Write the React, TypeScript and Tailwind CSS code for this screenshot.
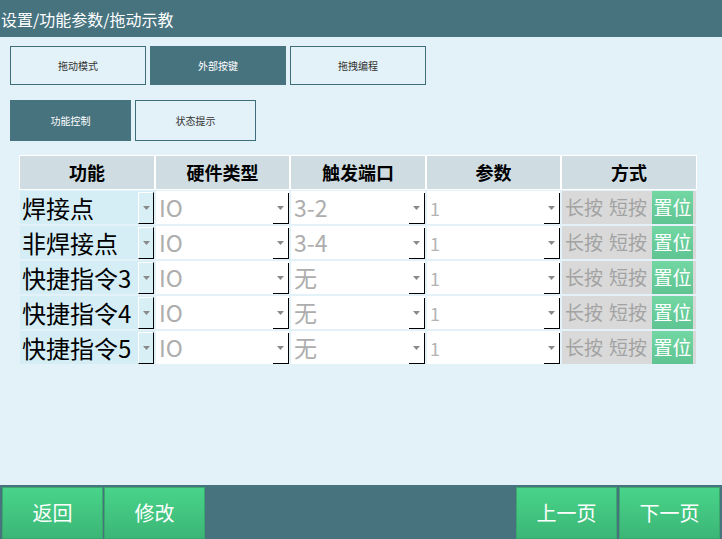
import React from "react"

const rows = [
	{ name: "焊接点", hw: "IO", port: "3-2", param: "1" },
	{ name: "非焊接点", hw: "IO", port: "3-4", param: "1" },
	{ name: "快捷指令3", hw: "IO", port: "无", param: "1" },
	{ name: "快捷指令4", hw: "IO", port: "无", param: "1" },
	{ name: "快捷指令5", hw: "IO", port: "无", param: "1" },
]

const Arrow = () => (
	<svg className="h-[4px] w-[7px]" viewBox="0 0 7 4">
		<path d="M0 0 L7 0 L3.5 4 Z" fill="#8a8a8a" />
	</svg>
)

// plain white combo cell, black L at right/bottom of the drop button
const Combo = ({ value, big }: { value: string; big?: boolean }) => (
	<div className="relative flex h-[33px] items-center bg-white pl-[3px]">
		<span
			className={
				big
					? "text-[23px] leading-none text-[#adadad]"
					: "text-[18px] leading-none text-[#b4b4b4]"
			}
		>
			{value}
		</span>
		<div className="absolute top-[2px] right-0 bottom-0 flex w-[16px] items-center justify-center border-r border-b border-black">
			<Arrow />
		</div>
	</div>
)

const TabOutline = ({ label, w, h }: { label: string; w: string; h: string }) => (
	<div
		className={`flex items-center justify-center border border-[#3f6d7a] bg-[#e3f2f8] text-[10px] text-[#333] ${w} ${h}`}
	>
		{label}
	</div>
)

const TabFilled = ({ label, w, h }: { label: string; w: string; h: string }) => (
	<div
		className={`flex items-center justify-center bg-[#47737f] text-[10px] text-white ${w} ${h}`}
	>
		{label}
	</div>
)

const GreenBtn = ({ label }: { label: string }) => (
	<div className="flex h-[52px] w-[101px] items-center justify-center border border-[#3aa86c] bg-gradient-to-b from-[#48d48a] to-[#3cb676] text-[20px] text-white">
		{label}
	</div>
)

export default function App() {
	return (
		<div
			className="flex h-[539px] w-[722px] flex-col bg-[#e3f2f8]"
			style={{ fontFamily: '"Noto Sans CJK SC", "Noto Sans", sans-serif' }}
		>
			{/* TITLE */}
			<div className="flex h-[37px] items-center bg-[#47737f] pl-[1px] text-[16px] text-white">
				设置/功能参数/拖动示教
			</div>

			{/* TABS */}
			<div className="mt-[9px] flex gap-[4px] pl-[10px]">
				<TabOutline h="h-[39px]" label="拖动模式" w="w-[136px]" />
				<TabFilled h="h-[39px]" label="外部按键" w="w-[136px]" />
				<TabOutline h="h-[39px]" label="拖拽编程" w="w-[136px]" />
			</div>
			<div className="mt-[15px] flex gap-[4px] pl-[10px]">
				<TabFilled h="h-[41px]" label="功能控制" w="w-[121px]" />
				<TabOutline h="h-[41px]" label="状态提示" w="w-[121px]" />
			</div>

			{/* TABLE */}
			<div className="mt-[14px] ml-[19px] w-[678px]">
				<div className="grid grid-cols-[134px_133px_134px_133px_134px] gap-x-[2px] bg-white p-[1px]">
					{["功能", "硬件类型", "触发端口", "参数", "方式"].map((h) => (
						<div
							className="flex h-[33px] items-center justify-center bg-[#cfdde2] text-[18px] font-bold text-black"
							key={h}
						>
							{h}
						</div>
					))}
				</div>
				<div className="mt-[1px] flex flex-col gap-[2px] px-[1px]">
					{rows.map((r) => (
						<div
							className="grid grid-cols-[134px_133px_134px_133px_134px] gap-x-[2px]"
							key={r.name}
						>
							<div className="relative flex h-[33px] items-center overflow-hidden bg-[#d5eef6] pl-[2px]">
								<span className="text-[24px] leading-none whitespace-nowrap text-black">
									{r.name}
								</span>
								<div className="absolute top-[1px] right-0 bottom-0 flex w-[16px] items-center justify-center border border-t-white border-r-black border-b-black border-l-white bg-[#d9eff6]">
									<Arrow />
								</div>
							</div>
							<Combo big value={r.hw} />
							<Combo big value={r.port} />
							<Combo value={r.param} />
							<div className="flex h-[33px] items-center bg-[#d9d9d9] pl-[3px]">
								<span className="text-[19px] text-[#a3a3a3]">长按</span>
								<span className="ml-[6px] text-[19px] text-[#a3a3a3]">短按</span>
								<div className="ml-[5px] flex h-[33px] w-[41px] items-center justify-center bg-gradient-to-b from-[#72d7a2] to-[#5ec492] text-[19px] text-white">
									置位
								</div>
							</div>
						</div>
					))}
				</div>
			</div>

			{/* BOTTOM BAR */}
			<div className="mt-auto flex h-[54px] items-end justify-between bg-[#47737f] px-[2px]">
				<div className="flex gap-[1px]">
					<GreenBtn label="返回" />
					<GreenBtn label="修改" />
				</div>
				<div className="flex gap-[2px]">
					<GreenBtn label="上一页" />
					<GreenBtn label="下一页" />
				</div>
			</div>
		</div>
	)
}
